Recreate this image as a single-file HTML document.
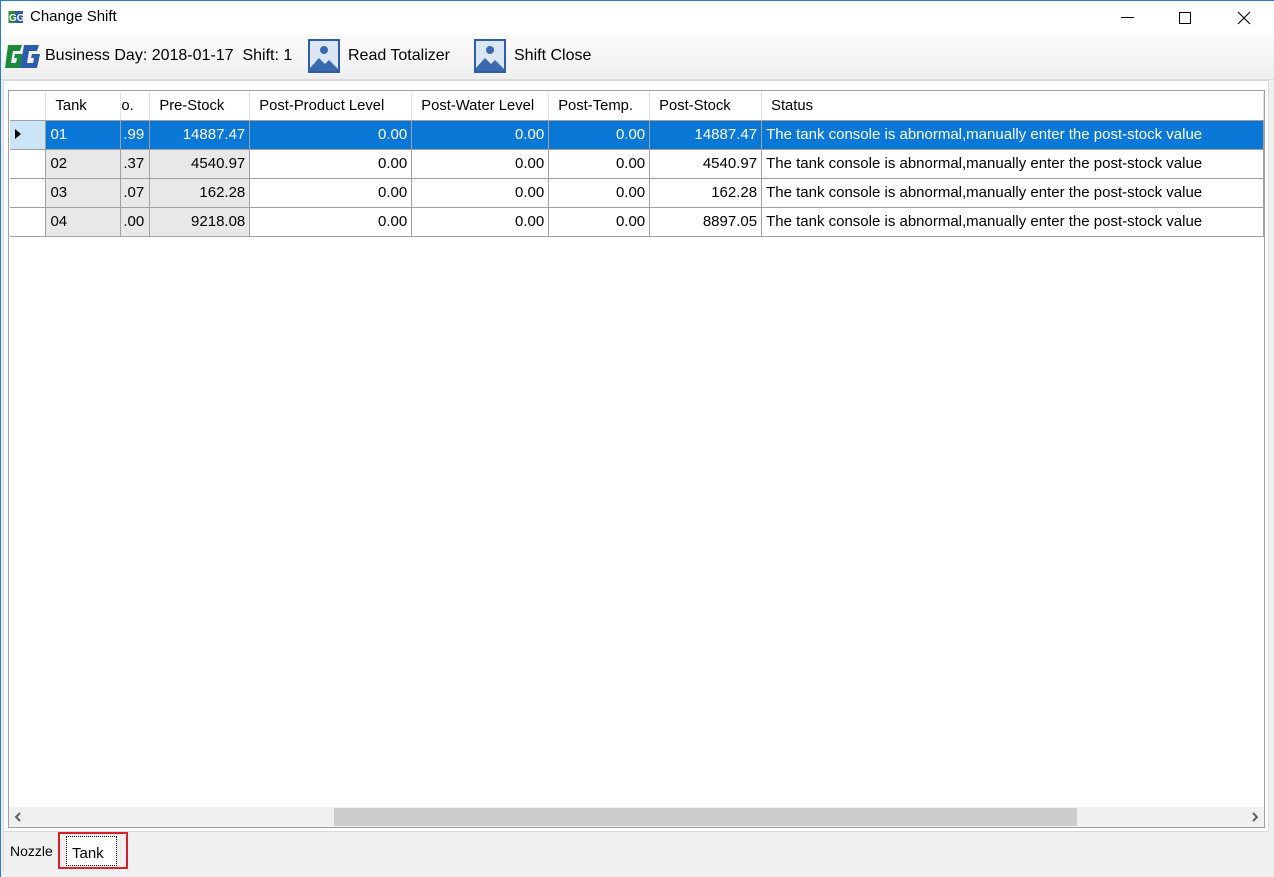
<!DOCTYPE html>
<html><head><meta charset="utf-8"><style>
*{box-sizing:border-box;margin:0;padding:0}
body{width:1274px;height:877px;background:#f0f0f0;font-family:"Liberation Sans",sans-serif;font-size:14px;color:#000;position:relative;overflow:hidden}
.a{position:absolute}
#win{left:0;top:0;width:1274px;height:877px;border:1px solid #2b7bd0;border-bottom:none;border-right:none}
#title{left:1px;top:1px;width:1273px;height:33px;background:#fff}
#tb{left:1px;top:34px;width:1273px;height:46px;background:linear-gradient(#fbfbfb,#eeeeee);border-bottom:1px solid #dcdcdc}
#page{left:3px;top:80px;width:1266px;height:752px;background:#fff;border:1px solid #d9d9d9}
#grid{left:8px;top:90px;width:1257px;height:738px;background:#fff;border:1px solid #a0a0a0}
table{border-collapse:collapse;position:absolute;left:1px;top:1px;table-layout:fixed}
td{height:29px;border-right:1px solid #a0a0a0;border-bottom:1px solid #a0a0a0;padding:0 4px;white-space:nowrap;overflow:hidden;font-size:15px}
tr.h td{height:28px;border-right:1px solid #e2e2e2;border-bottom:1px solid #a0a0a0;padding-left:9px;font-size:14.8px}
td.r{text-align:right}
td.g{background:#e8e8e8}
tr.s td{background:#0a78d7;color:#fff}
tr.s td.rh{background:#cce4f7;color:#000}
td.rh{border-right:1px solid #a0a0a0}
.tbt{font-size:16px;top:46px}
</style></head><body>
<div id="win" class="a"></div>
<div id="title" class="a">
<svg class="a" style="left:7px;top:8px" width="16" height="16" viewBox="0 0 16 16"><rect x="0.5" y="2" width="7" height="12" fill="#2a8a3a"/><rect x="7" y="2" width="8" height="12" fill="#2b5fae"/><text x="1" y="12" font-size="10" fill="#fff" font-family="Liberation Sans" font-weight="bold">GG</text></svg>
<div class="a" style="left:29px;top:7px;font-size:15px">Change Shift</div>
<div class="a" style="left:1120px;top:16px;width:13px;height:1px;background:#000"></div>
<div class="a" style="left:1178px;top:11px;width:12px;height:12px;border:1px solid #000"></div>
<svg class="a" style="left:1236px;top:10px" width="14" height="14"><path d="M1 1L13 13M13 1L1 13" stroke="#000" stroke-width="1.1"/></svg>
</div>
<div id="tb" class="a">
<svg class="a" style="left:3px;top:8px" width="36" height="30" viewBox="0 0 36 30"><path d="M4 3h14l-2 6h-7l-2 12h5l1-5h-3l1-4h8l-3 14H1z" fill="#1d8a3c"/><path d="M20 3h15l-2 6h-8l-2 12h6l1-5h-3l1-4h8l-3 14H16z" fill="#2a5db0"/></svg>
<div class="a tbt" style="left:44px;top:13px">Business Day: 2018-01-17&nbsp; Shift: 1</div>
<svg class="a" style="left:306px;top:4px" width="34" height="36" viewBox="0 0 34 36"><rect x="1" y="1" width="32" height="34" fill="#2d5ea8"/><rect x="3" y="3" width="28" height="30" fill="#dbe6f3"/><circle cx="17" cy="12" r="4" fill="#3a69b0"/><path d="M3 30l9-10 6 6 4-4 9 9v2H3z" fill="#3a69b0"/></svg>
<div class="a tbt" style="left:347px;top:13px">Read Totalizer</div>
<svg class="a" style="left:472px;top:4px" width="34" height="36" viewBox="0 0 34 36"><rect x="1" y="1" width="32" height="34" fill="#2d5ea8"/><rect x="3" y="3" width="28" height="30" fill="#dbe6f3"/><circle cx="17" cy="12" r="4" fill="#3a69b0"/><path d="M3 30l9-10 6 6 4-4 9 9v2H3z" fill="#3a69b0"/></svg>
<div class="a tbt" style="left:513px;top:13px">Shift Close</div>
</div>
<div id="page" class="a"></div>
<div id="grid" class="a">
<table>
<colgroup><col style="width:36px"><col style="width:75px"><col style="width:29px"><col style="width:100px"><col style="width:162px"><col style="width:137px"><col style="width:101px"><col style="width:112px"><col style="width:502px"></colgroup>
<tr class="h"><td class="rh"></td><td>Tank</td><td style="padding-left:0">o.</td><td>Pre-Stock</td><td>Post-Product Level</td><td>Post-Water Level</td><td>Post-Temp.</td><td>Post-Stock</td><td>Status</td></tr>
<tr class="s"><td class="rh"><svg width="8" height="10"><path d="M1 0l6 5-6 5z" fill="#000"/></svg></td><td>01</td><td style="padding:0 2px">.99</td><td class="r">14887.47</td><td class="r">0.00</td><td class="r">0.00</td><td class="r">0.00</td><td class="r">14887.47</td><td>The tank console is abnormal,manually enter the post-stock value</td></tr>
<tr><td class="rh"></td><td class="g">02</td><td class="g" style="padding:0 2px">.37</td><td class="r g">4540.97</td><td class="r">0.00</td><td class="r">0.00</td><td class="r">0.00</td><td class="r">4540.97</td><td>The tank console is abnormal,manually enter the post-stock value</td></tr>
<tr><td class="rh"></td><td class="g">03</td><td class="g" style="padding:0 2px">.07</td><td class="r g">162.28</td><td class="r">0.00</td><td class="r">0.00</td><td class="r">0.00</td><td class="r">162.28</td><td>The tank console is abnormal,manually enter the post-stock value</td></tr>
<tr><td class="rh"></td><td class="g">04</td><td class="g" style="padding:0 2px">.00</td><td class="r g">9218.08</td><td class="r">0.00</td><td class="r">0.00</td><td class="r">0.00</td><td class="r">8897.05</td><td>The tank console is abnormal,manually enter the post-stock value</td></tr>
</table>
<div class="a" style="left:0;top:716px;width:1255px;height:20px;background:#f0f0f0">
<svg class="a" style="left:5px;top:5px" width="8" height="10"><path d="M6 1L2 5l4 4" stroke="#606060" stroke-width="2" fill="none"/></svg>
<div class="a" style="left:325px;top:1px;width:743px;height:18px;background:#cdcdcd"></div>
<svg class="a" style="left:1242px;top:5px" width="8" height="10"><path d="M2 1l4 4-4 4" stroke="#606060" stroke-width="2" fill="none"/></svg>
</div>
</div>
<div class="a" style="left:3px;top:832px;width:57px;height:40px;border-left:1px solid #d9d9d9"></div>
<div class="a" style="left:10px;top:843px;font-size:14px">Nozzle</div>
<div class="a" style="left:58px;top:832px;width:70px;height:37px;border:2px solid #d9202a;background:#f0f0f0"></div>
<div class="a" style="left:66px;top:836px;width:51px;height:30px;border:1px dotted #000;background:#fff"></div>
<div class="a" style="left:72px;top:845px;font-size:15px">Tank</div>
</body></html>
